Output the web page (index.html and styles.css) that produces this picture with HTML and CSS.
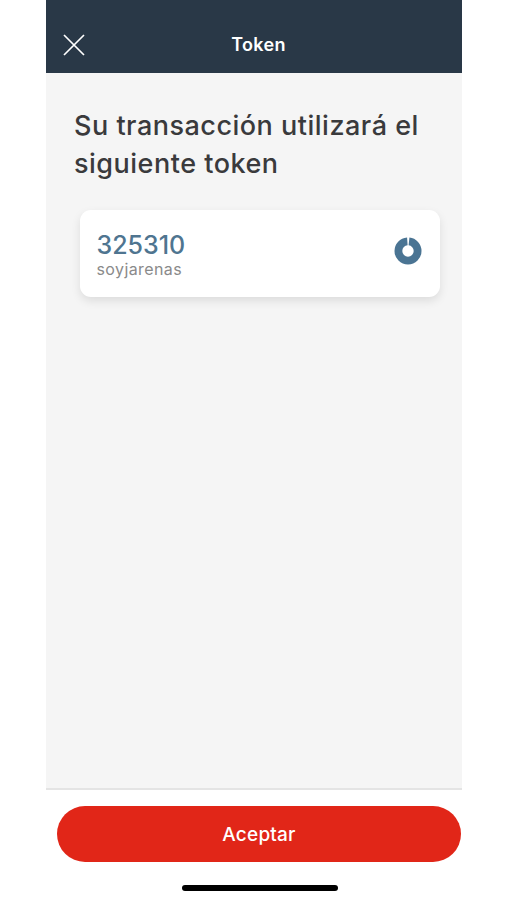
FILE: index.html
```html
<!DOCTYPE html>
<html lang="es">
<head>
  <meta charset="UTF-8" />
  <meta name="viewport" content="width=device-width, initial-scale=1.0" />
  <title>Token</title>
  <link rel="stylesheet" href="styles.css">
</head>
<body>
  <div class="phone">
    <header class="topbar">
      <button class="close" type="button" aria-label="Cerrar">
        <svg viewBox="0 0 22 22" width="22" height="22" aria-hidden="true">
          <path d="M1 1L21 21M21 1L1 21" stroke="#fff" stroke-width="1.7" fill="none" />
        </svg>
      </button>
      <span class="topbar-title">Token</span>
    </header>

    <main class="content">
      <h1>Su transacción utilizará el siguiente token</h1>
      <div class="token-card">
        <div class="token-info">
          <div class="token-code">325310</div>
          <div class="token-user">soyjarenas</div>
        </div>
        <svg class="token-timer" viewBox="0 0 28 28" width="28" height="28" aria-hidden="true">
          <circle cx="14" cy="14" r="9.6" fill="none" stroke="#4a7493" stroke-width="7.8" stroke-dasharray="58.2 2.1" stroke-dashoffset="-1.05" transform="rotate(-90 14 14)" />
        </svg>
      </div>
    </main>

    <footer class="actions">
      <button class="accept" type="button">Aceptar</button>
      <div class="home-bar"></div>
    </footer>
  </div>
</body>
</html>
```

FILE: styles.css
```css
body {
  margin: 0;
  padding-left: 46px;
  background: #fff;
  font-family: Inter, "Open Sans", sans-serif;
}
.phone {
  width: 416px;
  height: 900px;
  display: flex;
  flex-direction: column;
}
.topbar {
  height: 73px;
  flex: none;
  box-sizing: border-box;
  background: #293847;
  padding-top: 17px;
  display: flex;
  align-items: center;
  justify-content: center;
  position: relative;
}
.close {
  position: absolute;
  left: 17px;
  top: 34px;
  width: 22px;
  height: 22px;
  padding: 0;
  border: none;
  background: none;
  display: flex;
}
.topbar-title {
  margin-left: 9px;
  margin-top: -1px;
  color: #fff;
  font-size: 18px;
  font-weight: 600;
  letter-spacing: 0.3px;
}
.content {
  flex: 1;
  background: #f5f5f5;
  border-bottom: 2px solid #e4e4e4;
  padding: 34px 0 0 28px;
}
h1 {
  margin: 0;
  width: 366px;
  color: #3a3a3c;
  font-size: 27px;
  font-weight: 500;
  line-height: 38px;
  letter-spacing: 0.5px;
}
.token-card {
  margin: 27px 0 0 5.5px;
  height: 87px;
  width: 360px;
  box-sizing: border-box;
  padding: 1px 18px 0 17px;
  background: #fff;
  border-radius: 11px;
  box-shadow: 0 4px 10px rgba(0, 0, 0, 0.1);
  display: flex;
  align-items: center;
  justify-content: space-between;
}
.token-code {
  color: #4f7590;
  font-size: 25px;
  font-weight: 500;
  line-height: 30px;
}
.token-user {
  color: #8a8a8a;
  font-size: 16px;
  line-height: 18px;
  letter-spacing: 0.4px;
}
.token-timer {
  margin-top: -6px;
}
.actions {
  flex: none;
  height: 110px;
  box-sizing: border-box;
  padding: 16px 1px 0 11px;
  background: #fff;
  position: relative;
}
.accept {
  display: block;
  width: 100%;
  height: 56px;
  border: none;
  border-radius: 28px;
  background: #e12618;
  color: #fff;
  font-family: inherit;
  font-size: 19px;
  font-weight: 500;
  letter-spacing: 0.2px;
}
.home-bar {
  position: absolute;
  left: 136px;
  top: 95px;
  width: 156px;
  height: 6px;
  border-radius: 3px;
  background: #000;
}
```
